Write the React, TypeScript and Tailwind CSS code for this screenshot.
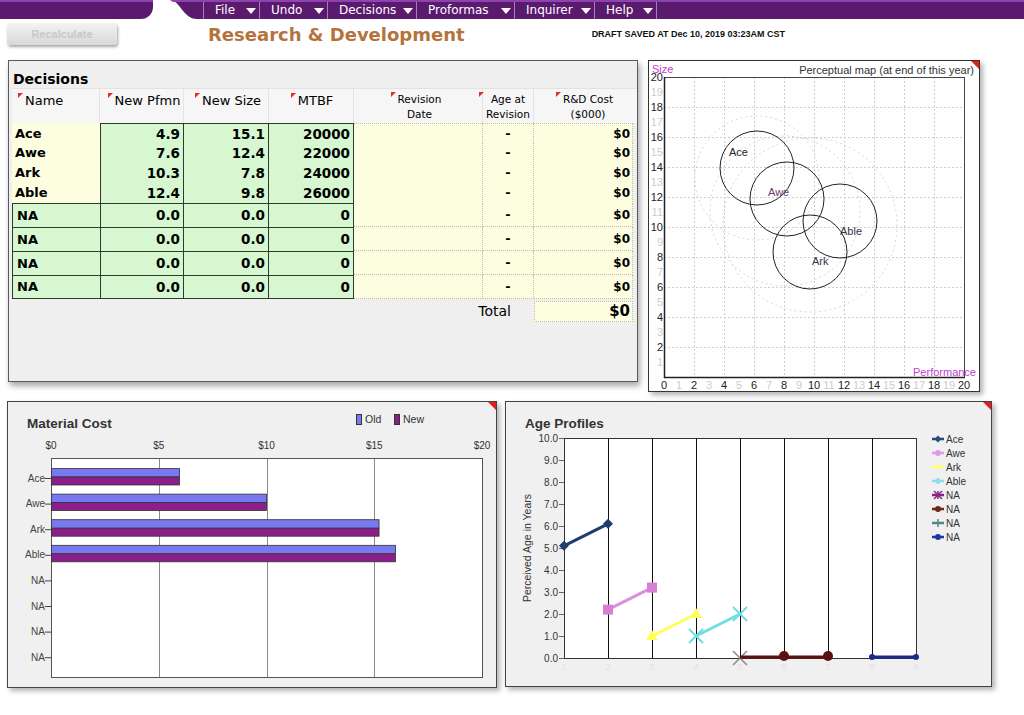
import React from "react";

const SANS = "Liberation Sans, Arial, sans-serif";

function Arrow() {
  return <span className="inline-block w-0 h-0 border-l-[5px] border-r-[5px] border-t-[6px] border-l-transparent border-r-transparent border-t-white" />;
}

const menu = [
  { label: "File", w: "w-[56px]" },
  { label: "Undo", w: "w-[68px]" },
  { label: "Decisions", w: "w-[89px]" },
  { label: "Proformas", w: "w-[98px]" },
  { label: "Inquirer", w: "w-[80px]" },
  { label: "Help", w: "w-[62px]" },
];

function TopBar() {
  return (
    <div className="flex h-[19px]">
      <div className="w-[153px] h-[19px] bg-[#5a1a6e] border-t-2 border-[#8d44b0] rounded-br-[12px]" />
      <svg width="50" height="19" className="block">
        <path d="M17 0 C 27 0, 30 19, 44 19 L 50 19 L 50 0 Z" fill="#5a1a6e" />
        <path d="M17 0 L50 0 L50 2 L20 2 Z" fill="#8d44b0" />
      </svg>
      <div className="flex-1 flex bg-[#5a1a6e] border-t-2 border-[#8d44b0] font-['DejaVu_Sans',sans-serif] text-white text-[12px] leading-[17px]">
        {menu.map((m) => (
          <div key={m.label} className={`${m.w} h-[17px] border-l border-[#a37fc2] flex items-center justify-between pl-[11px] pr-[3px]`}>
            <span>{m.label}</span>
            <Arrow />
          </div>
        ))}
        <div className="h-[17px] border-l border-[#a37fc2]" />
      </div>
    </div>
  );
}

function HeaderRow() {
  return (
    <div className="flex h-[41px] items-start">
      <div className="ml-[7px] mt-[4px] w-[110px] h-[22px] rounded-[3px] bg-linear-to-b from-[#f3f3f3] to-[#d8d8d8] shadow-[1px_2px_3px_rgba(0,0,0,0.35)] flex items-center justify-center text-[11px] font-bold text-[#c8c8c8] font-['Liberation_Sans',sans-serif]">
        Recalculate
      </div>
      <div className="ml-[91px] mt-[6px] text-[18px] leading-[20px] font-bold text-[#b5733c] font-['DejaVu_Sans',sans-serif]">
        Research &amp; Development
      </div>
      <div className="ml-[127px] mt-[10px] text-[9px] leading-[10px] font-bold text-[#111] font-['Liberation_Sans',sans-serif]">
        DRAFT SAVED AT Dec 10, 2019 03:23AM CST
      </div>
    </div>
  );
}

function Mark() {
  return <span className="absolute -left-[7px] top-[0px] w-0 h-0 border-t-[5px] border-t-[#e03030] border-r-[5px] border-r-transparent" />;
}

const COLS = "grid grid-cols-[88px_84px_85px_85px_129px_51px_99px]";

const rows = [
  { name: "Ace", p: "4.9", s: "15.1", m: "20000", na: false },
  { name: "Awe", p: "7.6", s: "12.4", m: "22000", na: false },
  { name: "Ark", p: "10.3", s: "7.8", m: "24000", na: false },
  { name: "Able", p: "12.4", s: "9.8", m: "26000", na: false },
  { name: "NA", p: "0.0", s: "0.0", m: "0", na: true },
  { name: "NA", p: "0.0", s: "0.0", m: "0", na: true },
  { name: "NA", p: "0.0", s: "0.0", m: "0", na: true },
  { name: "NA", p: "0.0", s: "0.0", m: "0", na: true },
];

function DecisionsPanel() {
  return (
    <div className="w-[630px] h-[322px] bg-[#efefef] border border-[#5a5a5a] shadow-[2px_4px_6px_rgba(0,0,0,0.35)] font-['DejaVu_Sans',sans-serif] text-black">
      <div className="pl-[4px] pt-[10px] text-[14px] leading-[16px] font-bold">Decisions</div>
      <div className="ml-[3px] mt-[1px]">
        <div className={`${COLS} h-[35px] bg-[#f6f6f7] border-t border-[#e2e2e2]`}>
          <div className="relative pl-[13px] pt-[4px] text-[13px] leading-[16px] border-r border-[#e4e4e4]">
            <span className="relative">Name<Mark /></span>
          </div>
          <div className="flex justify-center pl-[12px] pt-[4px] text-[13px] leading-[16px] border-r border-[#e4e4e4]">
            <span className="relative">New Pfmn<Mark /></span>
          </div>
          <div className="flex justify-center pl-[11px] pt-[4px] text-[13px] leading-[16px] border-r border-[#e4e4e4]">
            <span className="relative">New Size<Mark /></span>
          </div>
          <div className="flex justify-center pl-[9px] pt-[4px] text-[13px] leading-[16px] border-r border-[#e4e4e4]">
            <span className="relative">MTBF<Mark /></span>
          </div>
          <div className="flex justify-center pl-[3px] pt-[3px] text-[10.5px] leading-[15px] text-center border-r border-[#e4e4e4]">
            <span className="relative">Revision<br />Date<Mark /></span>
          </div>
          <div className="flex justify-center pt-[3px] text-[10.5px] leading-[15px] text-center border-r border-[#e4e4e4]">
            <span className="relative">Age at<br />Revision<Mark /></span>
          </div>
          <div className="flex justify-center pl-[9px] pt-[3px] text-[10.5px] leading-[15px] text-center">
            <span className="relative">R&amp;D Cost<br />($000)<Mark /></span>
          </div>
        </div>
        {rows.map((r, i) => {
          const last = i === rows.length - 1;
          const h = r.na ? "h-[24px]" : "h-[20px]";
          const nameCls = r.na
            ? `bg-[#d6f7cf] border-l border-t border-[#2f3a2f] ${last ? "border-b" : ""} pl-[4px] flex items-center text-[13px] font-bold`
            : "bg-[#fdfde0] border-b border-dotted border-[#b3b3a0] pl-[3px] flex items-center text-[13px] font-bold";
          const green = `bg-[#d6f7cf] border-r border-[#2f3a2f] flex items-center justify-end pr-[3px] font-bold text-[13.5px] ${r.na ? "border-t" : "border-b border-b-[#bcdcb6]"} ${i === 0 ? "border-t" : ""} ${last ? "border-b border-b-[#2f3a2f]" : ""}`;
          const yellow = `bg-[#fdfde0] border-b border-r border-dotted border-[#bdbdac] ${i === 0 ? "border-t" : ""}`;
          return (
            <div key={i} className={`${COLS} ${h}`}>
              <div className={nameCls}>{r.name}</div>
              <div className={`${green} border-l`}>{r.p}</div>
              <div className={green}>{r.s}</div>
              <div className={green}>{r.m}</div>
              <div className={yellow} />
              <div className={`${yellow} flex items-center justify-center font-bold text-[13px]`}>-</div>
              <div className={`${yellow} flex items-center justify-end pr-[2px] font-bold text-[12px]`}>$0</div>
            </div>
          );
        })}
        <div className="flex mt-[2px] h-[21px]">
          <div className="w-[522px] flex items-center justify-end pr-[23px] text-[14px]">Total</div>
          <div className="w-[99px] h-[21px] bg-[#fdfde0] border border-dotted border-[#bdbdac] flex items-center justify-end pr-[2px] font-bold text-[15px]">$0</div>
        </div>
      </div>
    </div>
  );
}

function PerceptualMap() {
  const px = (u: number) => 15 + 15 * u;
  const py = (v: number) => 316 - 15 * v;
  const grid = [2, 4, 6, 8, 10, 12, 14, 16, 18];
  const circles = [
    { cx: 108, cy: 107, label: "Ace", lx: 80, ly: 95, col: "#222" },
    { cx: 138, cy: 138, label: "Awe", lx: 119, ly: 135, col: "#6a3a6a" },
    { cx: 191, cy: 160, label: "Able", lx: 191, ly: 174, col: "#333344" },
    { cx: 161, cy: 191, label: "Ark", lx: 163, ly: 204, col: "#333344" },
  ];
  return (
    <div className="w-[332px] h-[332px] bg-white border border-[#333] shadow-[3px_3px_5px_rgba(0,0,0,0.3)]">
      <svg width="330" height="330" className="block" fontFamily={SANS}>
        {grid.map((g) => (
          <g key={g}>
            <line x1={px(g) + 0.5} y1={16} x2={px(g) + 0.5} y2={316} stroke="#cfcfcf" strokeDasharray="2 2" />
            <line x1={15} y1={py(g) + 0.5} x2={315} y2={py(g) + 0.5} stroke="#cfcfcf" strokeDasharray="2 2" />
          </g>
        ))}
        <circle cx={108} cy={117} r={62} fill="none" stroke="#d6d6d6" strokeDasharray="2 3" />
        <circle cx={136} cy={150} r={75} fill="none" stroke="#d6d6d6" strokeDasharray="2 3" />
        <circle cx={161} cy={164} r={87} fill="none" stroke="#d6d6d6" strokeDasharray="2 3" />
        <rect x={15.5} y={16.5} width={300} height={300} fill="none" stroke="#444" />
        <line x1={15.5} y1={16} x2={15.5} y2={317} stroke="#222" strokeWidth={1.5} />
        <line x1={15} y1={316.5} x2={316} y2={316.5} stroke="#222" strokeWidth={1.5} />
        {circles.map((c) => (
          <g key={c.label}>
            <circle cx={c.cx} cy={c.cy} r={37} fill="none" stroke="#222" strokeWidth={1} />
            <text x={c.lx} y={c.ly} fontSize={11} fill={c.col}>{c.label}</text>
          </g>
        ))}
        {Array.from({ length: 20 }, (_, k) => k + 1).map((v) => (
          <text key={"y" + v} x={14} y={py(v) + 4} fontSize={11} textAnchor="end" fill={v % 2 === 0 ? "#222" : "#cccccc"}>{v}</text>
        ))}
        {Array.from({ length: 21 }, (_, k) => k).map((u) => (
          <text key={"x" + u} x={px(u)} y={328} fontSize={11} textAnchor="middle" fill={u % 2 === 0 ? "#222" : "#cccccc"}>{u}</text>
        ))}
        <text x={3} y={12} fontSize={11} fill="#c040d0">Size</text>
        <text x={325} y={13} fontSize={11} textAnchor="end" fill="#333">Perceptual map (at end of this year)</text>
        <text x={327} y={315} fontSize={11} textAnchor="end" fill="#c040d0">Performance</text>
        <polygon points="322,0 330,0 330,8" fill="#e02020" />
      </svg>
    </div>
  );
}

function MaterialCost() {
  const mx = (d: number) => 43 + d * 21.55;
  const cats = ["Ace", "Awe", "Ark", "Able", "NA", "NA", "NA", "NA"];
  const cy = (i: number) => 76 + 25.6 * i;
  const vals = [5.94, 9.98, 15.2, 15.96];
  return (
    <div className="w-[490px] h-[287px] bg-[#f0f0f0] border border-[#444] shadow-[3px_3px_5px_rgba(0,0,0,0.3)]">
      <svg width="488" height="285" className="block" fontFamily={SANS}>
        <text x={19} y={26} fontSize={13.5} fontWeight="bold" fill="#333">Material Cost</text>
        <rect x={348.5} y={12.5} width={5} height={10} fill="#7878f0" stroke="#333" />
        <text x={357} y={21} fontSize={10.5} fill="#333">Old</text>
        <rect x={386.5} y={12.5} width={5} height={10} fill="#8c1e8c" stroke="#333" />
        <text x={395} y={21} fontSize={10.5} fill="#333">New</text>
        {[0, 5, 10, 15, 20].map((d) => (
          <text key={d} x={mx(d)} y={47} fontSize={10} textAnchor="middle" fill="#333">${d}</text>
        ))}
        <rect x={43.5} y={56.5} width={431} height={219} fill="white" stroke="#555" />
        {[5, 10, 15].map((d) => (
          <line key={d} x1={Math.round(mx(d)) + 0.5} y1={57} x2={Math.round(mx(d)) + 0.5} y2={275} stroke="#8a8a8a" />
        ))}
        {cats.map((c, i) => (
          <g key={i}>
            <text x={37} y={cy(i) + 3.5} fontSize={10} textAnchor="end" fill="#444">{c}</text>
            <line x1={37} y1={cy(i) + 0.5} x2={44} y2={cy(i) + 0.5} stroke="#444" />
          </g>
        ))}
        {vals.map((v, i) => (
          <g key={"b" + i}>
            <rect x={43.5} y={cy(i) - 9.5} width={v * 21.55} height={8.5} fill="#7878f0" stroke="#333" strokeWidth={0.8} />
            <rect x={43.5} y={cy(i) - 1} width={v * 21.55} height={8} fill="#8c1e8c" stroke="#333" strokeWidth={0.8} />
          </g>
        ))}
        <polygon points="480,0 488,0 488,8" fill="#e02020" />
      </svg>
    </div>
  );
}

function AgeProfiles() {
  const ax = (k: number) => 58 + 44 * k;
  const ay = (v: number) => 256 - 22 * v;
  const legend = [
    { label: "Ace", col: "#2a4a7a", mk: "diamond" },
    { label: "Awe", col: "#e099e6", mk: "circle" },
    { label: "Ark", col: "#ffff66", mk: "none" },
    { label: "Able", col: "#88ddee", mk: "diamond" },
    { label: "NA", col: "#882288", mk: "star" },
    { label: "NA", col: "#6b2a1a", mk: "circle" },
    { label: "NA", col: "#558888", mk: "plus" },
    { label: "NA", col: "#1a3aa0", mk: "circle" },
  ];
  const diamond = (x: number, y: number, s: number) => `${x},${y - s} ${x + s},${y} ${x},${y + s} ${x - s},${y}`;
  return (
    <div className="w-[487px] h-[286px] bg-[#f0f0f0] border border-[#444] shadow-[3px_3px_5px_rgba(0,0,0,0.3)]">
      <svg width="485" height="284" className="block" fontFamily={SANS}>
        <text x={19} y={26} fontSize={13.5} fontWeight="bold" fill="#333">Age Profiles</text>
        <rect x={58.5} y={36.5} width={352} height={220} fill="white" stroke="#333" />
        {[1, 2, 3, 4, 5, 6, 7].map((k) => (
          <line key={k} x1={ax(k) + 0.5} y1={36} x2={ax(k) + 0.5} y2={256} stroke="#111" />
        ))}
        {Array.from({ length: 11 }, (_, k) => k).map((v) => (
          <g key={v}>
            <text x={52} y={ay(v) + 3.5} fontSize={10} textAnchor="end" fill="#333">{v}.0</text>
            <line x1={53} y1={ay(v) + 0.5} x2={58} y2={ay(v) + 0.5} stroke="#666" />
          </g>
        ))}
        {Array.from({ length: 9 }, (_, k) => k).map((k) => (
          <text key={"x" + k} x={ax(k)} y={268} fontSize={9} textAnchor="middle" fill="#e2e2e2">{k + 1}</text>
        ))}
        <text x={0} y={0} fontSize={10.5} fill="#333" textAnchor="middle" transform="translate(25,146) rotate(-90)">Perceived Age in Years</text>
        <line x1={ax(0)} y1={ay(5.1)} x2={ax(1)} y2={ay(6.1)} stroke="#1e3c6e" strokeWidth={3} />
        <polygon points={diamond(ax(0), ay(5.1), 5)} fill="#1e3c6e" />
        <polygon points={diamond(ax(1), ay(6.1), 5)} fill="#1e3c6e" />
        <line x1={ax(1)} y1={ay(2.2)} x2={ax(2)} y2={ay(3.2)} stroke="#dd8fdd" strokeWidth={3} />
        <rect x={ax(1) - 5} y={ay(2.2) - 5} width={10} height={10} fill="#d57fd5" />
        <rect x={ax(2) - 5} y={ay(3.2) - 5} width={10} height={10} fill="#d57fd5" />
        <line x1={ax(2)} y1={ay(1.0)} x2={ax(3)} y2={ay(2.0)} stroke="#ffff55" strokeWidth={3} />
        <polygon points={`${ax(2)},${ay(1) - 6} ${ax(2) + 6},${ay(1) + 4} ${ax(2) - 6},${ay(1) + 4}`} fill="#ffff55" />
        <polygon points={`${ax(3)},${ay(2) - 6} ${ax(3) + 6},${ay(2) + 4} ${ax(3) - 6},${ay(2) + 4}`} fill="#ffff55" />
        <line x1={ax(3)} y1={ay(1.0)} x2={ax(4)} y2={ay(2.0)} stroke="#6fdede" strokeWidth={3} />
        {[[ax(3), ay(1)], [ax(4), ay(2)]].map(([x, y], i) => (
          <g key={"ab" + i} stroke="#6fdede" strokeWidth={2}>
            <line x1={x - 7} y1={y - 7} x2={x + 7} y2={y + 7} />
            <line x1={x - 7} y1={y + 7} x2={x + 7} y2={y - 7} />
          </g>
        ))}
        <g stroke="#888" strokeWidth={1.5}>
          <line x1={ax(4) - 7} y1={ay(0) - 7} x2={ax(4) + 7} y2={ay(0) + 7} />
          <line x1={ax(4) - 7} y1={ay(0) + 7} x2={ax(4) + 7} y2={ay(0) - 7} />
        </g>
        <line x1={ax(4)} y1={ay(0) - 1} x2={ax(6)} y2={ay(0) - 1} stroke="#5c1010" strokeWidth={3} />
        <circle cx={ax(5)} cy={ay(0) - 2} r={5} fill="#5c1010" />
        <circle cx={ax(6)} cy={ay(0) - 2} r={5} fill="#5c1010" />
        <line x1={ax(7)} y1={ay(0) - 1} x2={ax(8)} y2={ay(0) - 1} stroke="#1a2a8a" strokeWidth={3} />
        <circle cx={ax(7)} cy={ay(0) - 1} r={3} fill="#1a2a8a" />
        <circle cx={ax(8)} cy={ay(0) - 1} r={3} fill="#1a2a8a" />
        {legend.map((l, i) => {
          const y = 37 + 14 * i;
          return (
            <g key={i}>
              <line x1={426} y1={y} x2={438} y2={y} stroke={l.col} strokeWidth={2.5} />
              {l.mk === "diamond" && <polygon points={diamond(432, y, 3.5)} fill={l.col} />}
              {l.mk === "circle" && <circle cx={432} cy={y} r={3} fill={l.col} />}
              {l.mk === "star" && (
                <g stroke={l.col} strokeWidth={1.5}>
                  <line x1={428} y1={y - 4} x2={436} y2={y + 4} />
                  <line x1={428} y1={y + 4} x2={436} y2={y - 4} />
                  <line x1={432} y1={y - 4} x2={432} y2={y + 4} />
                </g>
              )}
              {l.mk === "plus" && (
                <g stroke={l.col} strokeWidth={1.5}>
                  <line x1={432} y1={y - 4} x2={432} y2={y + 4} />
                </g>
              )}
              <text x={440} y={y + 3.5} fontSize={10} fill="#333">{l.label}</text>
            </g>
          );
        })}
        <polygon points="477,0 485,0 485,8" fill="#e02020" />
      </svg>
    </div>
  );
}

export default function App() {
  return (
    <div className="w-[1024px] h-[715px] bg-white overflow-hidden">
      <TopBar />
      <HeaderRow />
      <div className="flex items-start pl-[8px]">
        <DecisionsPanel />
        <div className="ml-[10px]">
          <PerceptualMap />
        </div>
      </div>
      <div className="flex items-start pl-[7px] mt-[9px]">
        <MaterialCost />
        <div className="ml-[8px]">
          <AgeProfiles />
        </div>
      </div>
    </div>
  );
}
